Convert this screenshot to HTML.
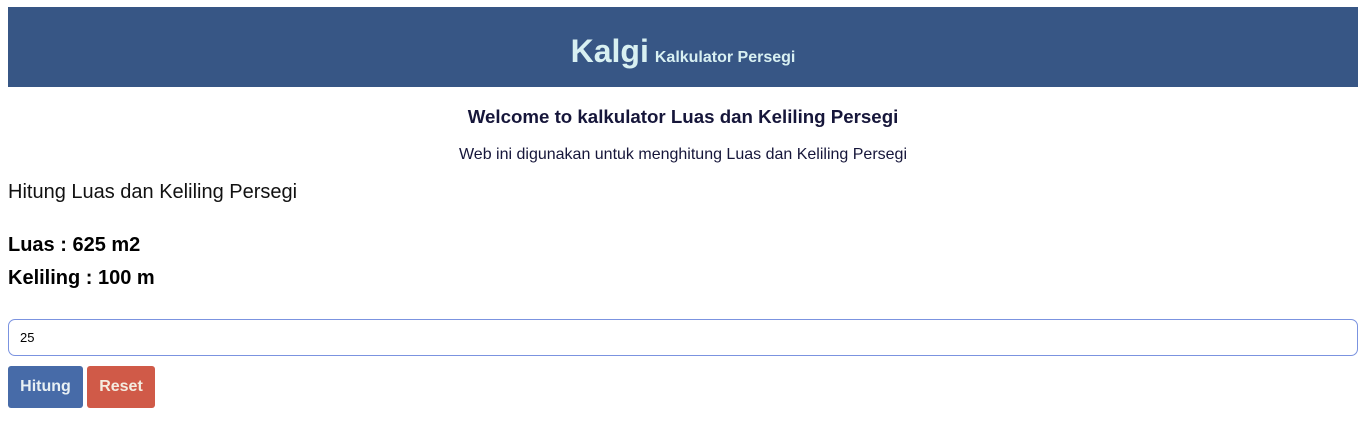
<!DOCTYPE html>
<html><head><style>
body{margin:0;background:#fff;font-family:"Liberation Sans",Arial,sans-serif;}
.hd{position:absolute;left:8px;top:7px;width:1350px;height:80px;background:#375685;color:#d8f0f2;text-align:center;font-weight:bold;}
.hd .t{position:absolute;left:0;right:0;top:26px;white-space:nowrap;}
.hd .a{font-size:32px;}
.hd .b{font-size:16px;margin-left:6px;}
.abs{position:absolute;white-space:nowrap;}
</style></head><body>
<div class="hd"><div class="t"><span class="a">Kalgi</span><span class="b">Kalkulator Persegi</span></div></div>
<div class="abs" style="left:0;right:0;top:106px;text-align:center;font-size:18.7px;font-weight:bold;color:#16163a">Welcome to kalkulator Luas dan Keliling Persegi</div>
<div class="abs" style="left:0;right:0;top:146px;text-align:center;font-size:16px;color:#16163a">Web ini digunakan untuk menghitung Luas dan Keliling Persegi</div>
<div class="abs" style="left:8px;top:181px;font-size:20px;color:#111">Hitung Luas dan Keliling Persegi</div>
<div class="abs" style="left:8px;top:234px;font-size:20px;font-weight:bold;color:#000">Luas : 625 m2</div>
<div class="abs" style="left:8px;top:267px;font-size:20px;font-weight:bold;color:#000">Keliling : 100 m</div>
<div class="abs" style="left:8px;top:319px;width:1348px;height:35px;border:1px solid #7b93e0;border-radius:7px;"><span style="position:absolute;left:11px;top:10px;font-size:13px;color:#000">25</span></div>
<div class="abs" style="left:8px;top:366px;width:75px;height:42px;background:#476ba8;border-radius:3px;color:#e8f0f4;font-weight:bold;font-size:16px;text-align:center;line-height:41px">Hitung</div>
<div class="abs" style="left:87px;top:366px;width:68px;height:42px;background:#d05a48;border-radius:3px;color:#f4ece0;font-weight:bold;font-size:16px;text-align:center;line-height:41px">Reset</div>
</body></html>
